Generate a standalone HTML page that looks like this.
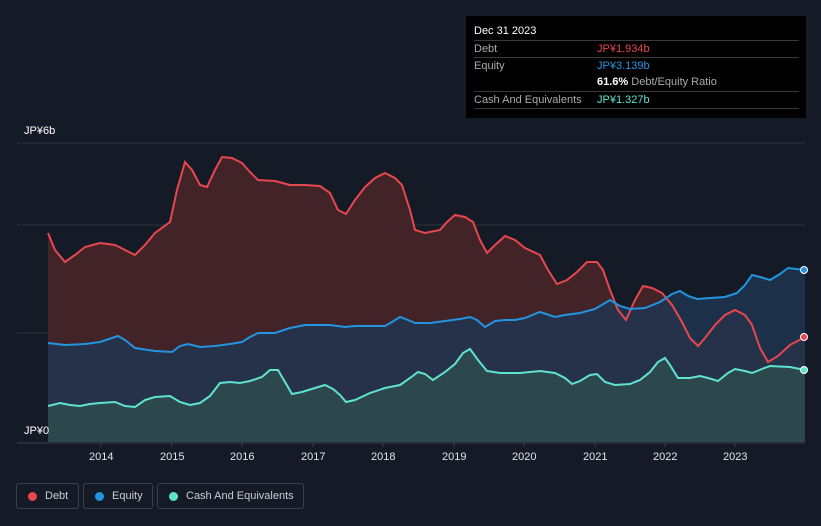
<!DOCTYPE html>
<html><head><meta charset="utf-8"><style>
body{margin:0;background:#151b26;width:821px;height:526px;overflow:hidden;font-family:"Liberation Sans",Arial,sans-serif;position:relative}
.tt{position:absolute;left:466px;top:16px;width:340px;height:102px;background:#000;color:#fff;font-size:11px}
.row{position:absolute;left:8px;width:325px;height:17px;border-top:1px solid #3a3a3a}
.row span{position:absolute;top:2px}
.lg{position:absolute;top:483px;height:26px;border:1px solid #3a414c;border-radius:3px;color:#c8ccd2;font-size:11px;box-sizing:border-box}
.lg i{position:absolute;left:11px;top:8px;width:9px;height:9px;border-radius:50%}
.lg b{position:absolute;left:28px;top:6px;font-weight:normal}
.ax{position:absolute;top:451px;color:#e0e3e8;font-size:11px}
</style></head><body>
<svg width="821" height="526" style="position:absolute;left:0;top:0">
<line x1="17" y1="143" x2="805" y2="143" stroke="#2a313d"/>
<line x1="17" y1="225" x2="805" y2="225" stroke="#2a313d"/>
<line x1="17" y1="333" x2="805" y2="333" stroke="#2a313d"/>
<path d="M48,233 L55,250 65,262 75,255 85,247 100,243 115,245 125,250 135,255 145,245 155,233 170,222 177,190 185,162 192,170 200,185 207,187 215,170 222,157 232,158 242,163 250,172 258,180 275,181 290,185 305,185 320,186 330,193 338,210 346,214 355,200 365,187 375,178 385,173 395,178 402,185 410,210 415,230 425,233 440,230 447,222 455,215 465,217 473,222 480,240 487,253 495,245 505,236 515,240 525,248 540,255 548,270 557,284 567,280 577,272 587,262 597,262 603,270 610,290 618,310 626,320 635,300 643,286 652,288 662,293 672,305 682,322 690,338 698,346 705,338 715,325 725,315 735,310 745,315 752,325 760,348 768,362 778,356 790,345 805,337 L805,442 L48,442Z" fill="#4a2429" opacity="0.85"/>
<path d="M48,343 L65,345 85,344 100,342 118,336 125,340 135,348 155,351 172,352 180,346 188,344 200,347 215,346 230,344 242,342 250,337 258,333 275,333 290,328 305,325 320,325 330,325 345,327 355,326 370,326 385,326 392,322 400,317 408,320 415,323 430,323 445,321 460,319 470,317 477,320 485,327 495,321 505,320 515,320 525,318 540,312 555,317 565,315 580,313 595,309 610,300 620,306 630,309 645,308 660,302 672,294 680,291 688,296 697,299 710,298 725,297 737,293 745,285 752,275 760,277 770,280 780,274 788,268 805,270 L805,442 L48,442Z" fill="#1e3652" opacity="0.8"/>
<path d="M48,406 L60,403 70,405 80,406 90,404 100,403 115,402 125,406 135,407 145,400 155,397 170,396 180,402 190,405 200,403 210,396 220,383 230,382 240,383 250,381 262,377 270,370 278,370 285,382 292,394 302,392 315,388 325,385 333,389 340,395 346,402 355,400 370,393 385,388 400,385 410,378 418,372 425,374 433,380 445,372 455,364 463,353 470,349 478,360 487,371 500,373 520,373 530,372 540,371 555,373 565,378 572,384 580,381 590,375 597,374 605,382 615,385 630,384 640,380 650,372 658,362 665,358 670,365 678,378 690,378 700,376 708,378 718,381 728,373 735,369 745,371 752,373 762,369 770,366 790,367 805,370 L805,442 L48,442Z" fill="#2f4a4e" opacity="0.9"/>
<polyline fill="none" stroke="#e8474f" stroke-width="2" points="48,233 55,250 65,262 75,255 85,247 100,243 115,245 125,250 135,255 145,245 155,233 170,222 177,190 185,162 192,170 200,185 207,187 215,170 222,157 232,158 242,163 250,172 258,180 275,181 290,185 305,185 320,186 330,193 338,210 346,214 355,200 365,187 375,178 385,173 395,178 402,185 410,210 415,230 425,233 440,230 447,222 455,215 465,217 473,222 480,240 487,253 495,245 505,236 515,240 525,248 540,255 548,270 557,284 567,280 577,272 587,262 597,262 603,270 610,290 618,310 626,320 635,300 643,286 652,288 662,293 672,305 682,322 690,338 698,346 705,338 715,325 725,315 735,310 745,315 752,325 760,348 768,362 778,356 790,345 805,337"/>
<polyline fill="none" stroke="#2394df" stroke-width="2" points="48,343 65,345 85,344 100,342 118,336 125,340 135,348 155,351 172,352 180,346 188,344 200,347 215,346 230,344 242,342 250,337 258,333 275,333 290,328 305,325 320,325 330,325 345,327 355,326 370,326 385,326 392,322 400,317 408,320 415,323 430,323 445,321 460,319 470,317 477,320 485,327 495,321 505,320 515,320 525,318 540,312 555,317 565,315 580,313 595,309 610,300 620,306 630,309 645,308 660,302 672,294 680,291 688,296 697,299 710,298 725,297 737,293 745,285 752,275 760,277 770,280 780,274 788,268 805,270"/>
<polyline fill="none" stroke="#5fe3cf" stroke-width="2" points="48,406 60,403 70,405 80,406 90,404 100,403 115,402 125,406 135,407 145,400 155,397 170,396 180,402 190,405 200,403 210,396 220,383 230,382 240,383 250,381 262,377 270,370 278,370 285,382 292,394 302,392 315,388 325,385 333,389 340,395 346,402 355,400 370,393 385,388 400,385 410,378 418,372 425,374 433,380 445,372 455,364 463,353 470,349 478,360 487,371 500,373 520,373 530,372 540,371 555,373 565,378 572,384 580,381 590,375 597,374 605,382 615,385 630,384 640,380 650,372 658,362 665,358 670,365 678,378 690,378 700,376 708,378 718,381 728,373 735,369 745,371 752,373 762,369 770,366 790,367 805,370"/>
<circle cx="804" cy="337" r="3.5" fill="#e8474f" stroke="#fff" stroke-width="1"/>
<circle cx="804" cy="270" r="3.5" fill="#2394df" stroke="#fff" stroke-width="1"/>
<circle cx="804" cy="370" r="3.5" fill="#5fe3cf" stroke="#fff" stroke-width="1"/>
<line x1="17" y1="443" x2="805" y2="443" stroke="#3a414c"/>
<g stroke="#3a414c"><line x1="101" y1="443" x2="101" y2="447"/><line x1="171.5" y1="443" x2="171.5" y2="447"/><line x1="242" y1="443" x2="242" y2="447"/><line x1="313" y1="443" x2="313" y2="447"/><line x1="383" y1="443" x2="383" y2="447"/><line x1="454" y1="443" x2="454" y2="447"/><line x1="524" y1="443" x2="524" y2="447"/><line x1="595" y1="443" x2="595" y2="447"/><line x1="665" y1="443" x2="665" y2="447"/><line x1="735" y1="443" x2="735" y2="447"/></g>
</svg>
<div style="position:absolute;left:17px;top:424px;width:31px;height:18px;background:#151b26"></div>
<div style="position:absolute;left:24px;top:425px;color:#fff;font-size:11px">JP¥0</div>
<div style="position:absolute;left:24px;top:125px;color:#fff;font-size:11px">JP¥6b</div>
<div class="ax" style="left:89px">2014</div><div class="ax" style="left:160px">2015</div><div class="ax" style="left:230px">2016</div><div class="ax" style="left:301px">2017</div><div class="ax" style="left:371px">2018</div><div class="ax" style="left:442px">2019</div><div class="ax" style="left:512px">2020</div><div class="ax" style="left:583px">2021</div><div class="ax" style="left:653px">2022</div><div class="ax" style="left:723px">2023</div>
<div class="tt">
<div style="position:absolute;left:8px;top:9px">Dec 31 2023</div>
<div class="row" style="top:24px"><span style="color:#aaa">Debt</span><span style="left:123px;color:#e8474f">JP¥1.934b</span></div>
<div class="row" style="top:41px"><span style="color:#aaa">Equity</span><span style="left:123px;color:#2394df">JP¥3.139b</span></div>
<div style="position:absolute;left:131px;top:60px"><b>61.6%</b> <span style="color:#aaa">Debt/Equity Ratio</span></div>
<div class="row" style="top:75px"><span style="color:#aaa">Cash And Equivalents</span><span style="left:123px;color:#5fe3cf">JP¥1.327b</span></div>
<div class="row" style="top:92px;height:0"></div>
</div>
<div class="lg" style="left:16px;width:63px"><i style="background:#e8474f"></i><b>Debt</b></div>
<div class="lg" style="left:83px;width:70px"><i style="background:#2394df"></i><b>Equity</b></div>
<div class="lg" style="left:157px;width:147px"><i style="background:#5fe3cf"></i><b>Cash And Equivalents</b></div>
</body></html>
